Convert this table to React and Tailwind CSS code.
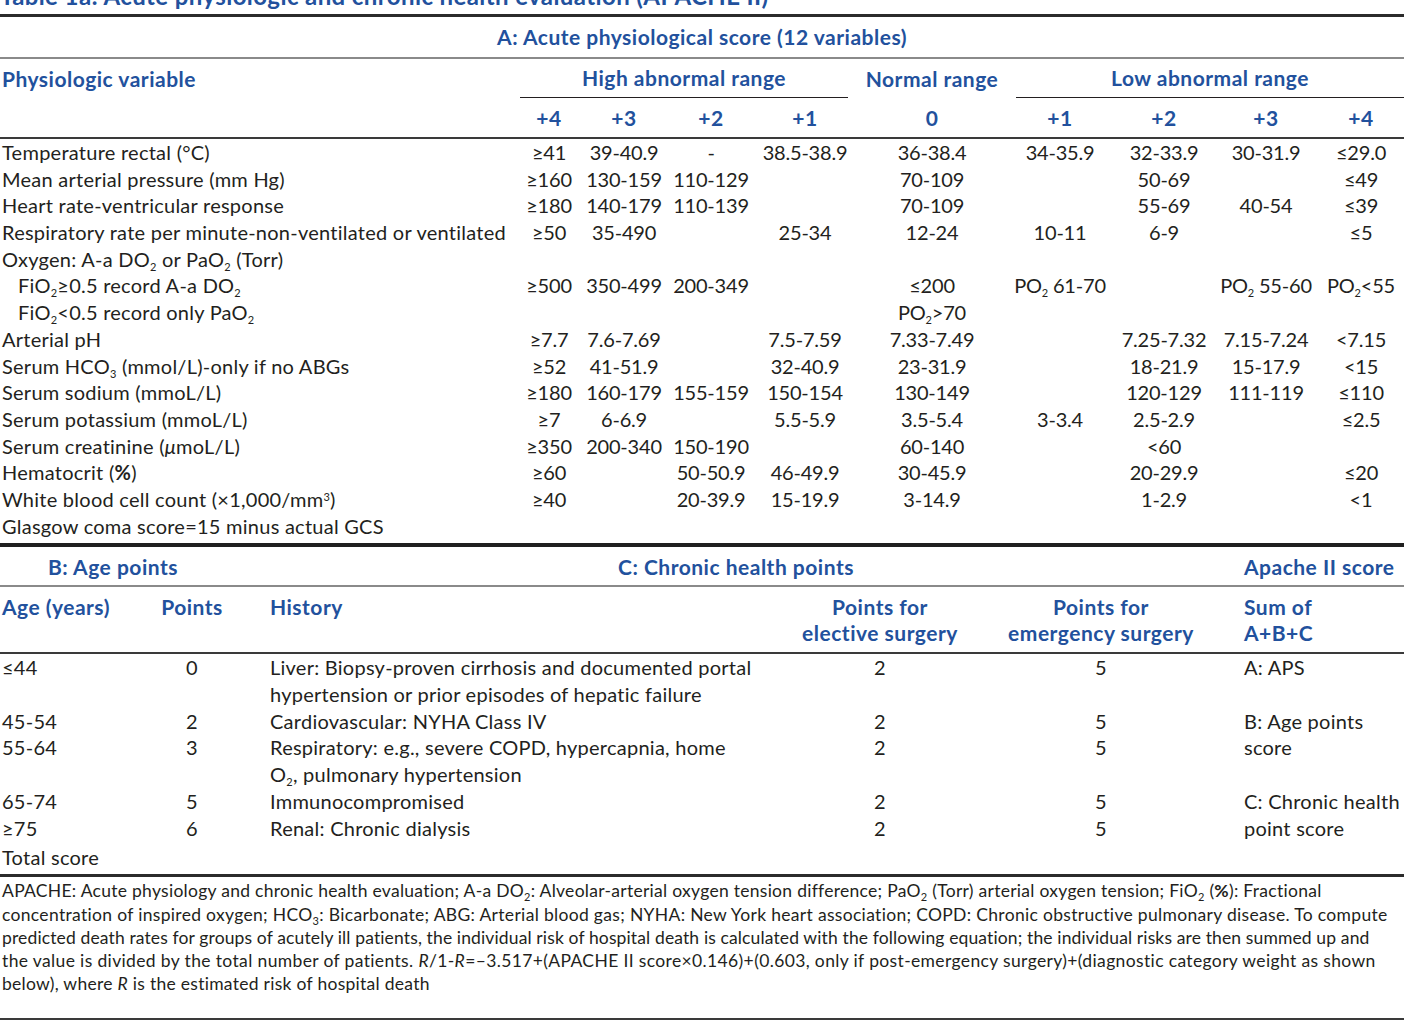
import React from "react";

const BLUE = "text-[#22519d]";
const HEAD = "font-bold text-[21px] tracking-[0.5px]";
const COLS_A = "grid grid-cols-[520px_58px_92px_82px_106px_148px_108px_100px_104px_86px]";
const COLS_B = "grid grid-cols-[158px_68px_534px_240px_202px_202px]";

const S = ({ children }) => (
  <sub className="text-[11px] relative -bottom-[4px] leading-none">{children}</sub>
);

const PO = ({ rest }) => (
  <>
    PO<S>2</S>
    {rest}
  </>
);

const rowsA = [
  { label: <>Temperature rectal (°C)</>, v: ["≥41", "39-40.9", "-", "38.5-38.9", "36-38.4", "34-35.9", "32-33.9", "30-31.9", "≤29.0"] },
  { label: <>Mean arterial pressure (mm Hg)</>, v: ["≥160", "130-159", "110-129", "", "70-109", "", "50-69", "", "≤49"] },
  { label: <>Heart rate-ventricular response</>, v: ["≥180", "140-179", "110-139", "", "70-109", "", "55-69", "40-54", "≤39"] },
  { label: <>Respiratory rate per minute-non-ventilated or ventilated</>, v: ["≥50", "35-490", "", "25-34", "12-24", "10-11", "6-9", "", "≤5"] },
  { label: <>Oxygen: A-a DO<S>2</S> or PaO<S>2</S> (Torr)</>, v: ["", "", "", "", "", "", "", "", ""] },
  {
    label: <>FiO<S>2</S>≥0.5 record A-a DO<S>2</S></>,
    indent: true,
    v: ["≥500", "350-499", "200-349", "", "≤200", <PO rest=" 61-70" />, "", <PO rest=" 55-60" />, <PO rest="<55" />],
  },
  {
    label: <>FiO<S>2</S>&lt;0.5 record only PaO<S>2</S></>,
    indent: true,
    v: ["", "", "", "", <PO rest=">70" />, "", "", "", ""],
  },
  { label: <>Arterial pH</>, v: ["≥7.7", "7.6-7.69", "", "7.5-7.59", "7.33-7.49", "", "7.25-7.32", "7.15-7.24", "<7.15"] },
  { label: <>Serum HCO<S>3</S> (mmol/L)-only if no ABGs</>, v: ["≥52", "41-51.9", "", "32-40.9", "23-31.9", "", "18-21.9", "15-17.9", "<15"] },
  { label: <>Serum sodium (mmoL/L)</>, v: ["≥180", "160-179", "155-159", "150-154", "130-149", "", "120-129", "111-119", "≤110"] },
  { label: <>Serum potassium (mmoL/L)</>, v: ["≥7", "6-6.9", "", "5.5-5.9", "3.5-5.4", "3-3.4", "2.5-2.9", "", "≤2.5"] },
  { label: <>Serum creatinine (<i>μ</i>moL/L)</>, v: ["≥350", "200-340", "150-190", "", "60-140", "", "<60", "", ""] },
  { label: <>Hematocrit (<b>%</b>)</>, v: ["≥60", "", "50-50.9", "46-49.9", "30-45.9", "", "20-29.9", "", "≤20"] },
  {
    label: <>White blood cell count (×1,000/mm<sup className="text-[11px] leading-none">3</sup>)</>,
    v: ["≥40", "", "20-39.9", "15-19.9", "3-14.9", "", "1-2.9", "", "<1"],
  },
  { label: <>Glasgow coma score=15 minus actual GCS</>, v: ["", "", "", "", "", "", "", "", ""] },
];

const rowsB = [
  {
    age: "≤44",
    pts: "0",
    hist: <>Liver: Biopsy-proven cirrhosis and documented portal<br />hypertension or prior episodes of hepatic failure</>,
    el: "2",
    em: "5",
    sum: "A: APS",
  },
  { age: "45-54", pts: "2", hist: <>Cardiovascular: NYHA Class IV</>, el: "2", em: "5", sum: "B: Age points" },
  {
    age: "55-64",
    pts: "3",
    hist: <>Respiratory: e.g., severe COPD, hypercapnia, home<br />O<S>2</S>, pulmonary hypertension</>,
    el: "2",
    em: "5",
    sum: "score",
  },
  { age: "65-74", pts: "5", hist: <>Immunocompromised</>, el: "2", em: "5", sum: "C: Chronic health" },
  { age: "≥75", pts: "6", hist: <>Renal: Chronic dialysis</>, el: "2", em: "5", sum: "point score" },
];

const scores = ["+4", "+3", "+2", "+1", "0", "+1", "+2", "+3", "+4"];

export default function App() {
  return (
    <div className="w-[1404px] h-[1020px] overflow-hidden bg-white text-[#231f20] [font-family:Lato,sans-serif] text-[20px] tracking-[0.25px]">
      {/* caption, cut at the top edge like the scan */}
      <div className="h-[14px] overflow-hidden flex items-end">
        <div className={`${BLUE} font-bold text-[24px] leading-[24px] pb-[6px] whitespace-nowrap tracking-[0.4px]`}>
          Table 1a: Acute physiologic and chronic health evaluation (APACHE II)
        </div>
      </div>
      <div className="border-t-[3px] border-[#2b2b2b]" />

      {/* A */}
      <div className={`h-[40px] flex items-center justify-center ${BLUE} ${HEAD}`}>
        A: Acute physiological score (12 variables)
      </div>
      <div className="border-t-2 border-[#8a8a8a]" />

      <div className={`${COLS_A} h-[39px] ${BLUE} ${HEAD}`}>
        <div className="pl-[2px] flex items-center">Physiologic variable</div>
        <div className="col-span-4 mr-[10px] flex items-center justify-center border-b border-[#231f20]">
          High abnormal range
        </div>
        <div className="flex items-center justify-center whitespace-nowrap">Normal range</div>
        <div className="col-span-4 ml-[10px] flex items-center justify-center border-b border-[#231f20]">
          Low abnormal range
        </div>
      </div>
      <div className={`${COLS_A} h-[39px] ${BLUE} ${HEAD}`}>
        <div />
        {scores.map((s, i) => (
          <div key={i} className="flex items-center justify-center">
            {s}
          </div>
        ))}
      </div>
      <div className="border-t-2 border-[#3a3a3a]" />

      <div className="pb-[4px]">
        {rowsA.map((r, i) => (
          <div key={i} className={`${COLS_A} h-[26.7px] leading-[26.7px] whitespace-nowrap`}>
            <div className={r.indent ? "pl-[18px]" : "pl-[2px]"}>{r.label}</div>
            {r.v.map((v, j) => (
              <div key={j} className="text-center tracking-[-0.2px]">
                {v}
              </div>
            ))}
          </div>
        ))}
      </div>
      <div className="border-t-4 border-[#1f1f1f]" />

      {/* B / C */}
      <div className={`${COLS_B} h-[38px] items-center ${BLUE} ${HEAD} whitespace-nowrap`}>
        <div className="col-span-2 text-center">B: Age points</div>
        <div className="col-span-3 pl-[44px] text-center">C: Chronic health points</div>
        <div className="pl-[42px]">Apache II score</div>
      </div>
      <div className="border-t-2 border-[#8a8a8a]" />

      <div className={`${COLS_B} h-[65px] pt-[7px] leading-[26px] ${BLUE} ${HEAD} whitespace-nowrap`}>
        <div className="pl-[2px]">Age (years)</div>
        <div className="text-center">Points</div>
        <div className="pl-[44px]">History</div>
        <div className="text-center">
          Points for
          <br />
          elective surgery
        </div>
        <div className="text-center">
          Points for
          <br />
          emergency surgery
        </div>
        <div className="pl-[42px]">
          Sum of
          <br />
          A+B+C
        </div>
      </div>
      <div className="border-t-2 border-[#3a3a3a]" />

      <div className="leading-[26.7px] whitespace-nowrap">
        {rowsB.map((r, i) => (
          <div key={i} className={COLS_B}>
            <div className="pl-[2px]">{r.age}</div>
            <div className="text-center">{r.pts}</div>
            <div className="pl-[44px]">{r.hist}</div>
            <div className="text-center">{r.el}</div>
            <div className="text-center">{r.em}</div>
            <div className="pl-[42px]">{r.sum}</div>
          </div>
        ))}
        <div className="pl-[2px] pt-[3px] h-[33px]">Total score</div>
      </div>
      <div className="border-t-[3px] border-[#2b2b2b]" />

      {/* notes */}
      <div className="h-[141px] pt-[2px] pl-[2px] text-[17.5px] leading-[23.3px] whitespace-nowrap">
        <div className="tracking-[0.28px]">
          APACHE: Acute physiology and chronic health evaluation; A-a DO<S>2</S>: Alveolar-arterial oxygen tension
          difference; PaO<S>2</S> (Torr) arterial oxygen tension; FiO<S>2</S> (<b>%</b>): Fractional
        </div>
        <div className="tracking-[0.32px]">
          concentration of inspired oxygen; HCO<S>3</S>: Bicarbonate; ABG: Arterial blood gas; NYHA: New York heart
          association; COPD: Chronic obstructive pulmonary disease. To compute
        </div>
        <div className="tracking-[0.13px]">
          predicted death rates for groups of acutely ill patients, the individual risk of hospital death is calculated
          with the following equation; the individual risks are then summed up and
        </div>
        <div className="tracking-[0.36px]">
          the value is divided by the total number of patients. <i>R</i>/1-<i>R</i>=–3.517+(APACHE II score×0.146)+(0.603,
          only if post-emergency surgery)+(diagnostic category weight as shown
        </div>
        <div className="tracking-[0.28px]">
          below), where <i>R</i> is the estimated risk of hospital death
        </div>
      </div>
      <div className="border-t-2 border-[#3a3a3a]" />
    </div>
  );
}
